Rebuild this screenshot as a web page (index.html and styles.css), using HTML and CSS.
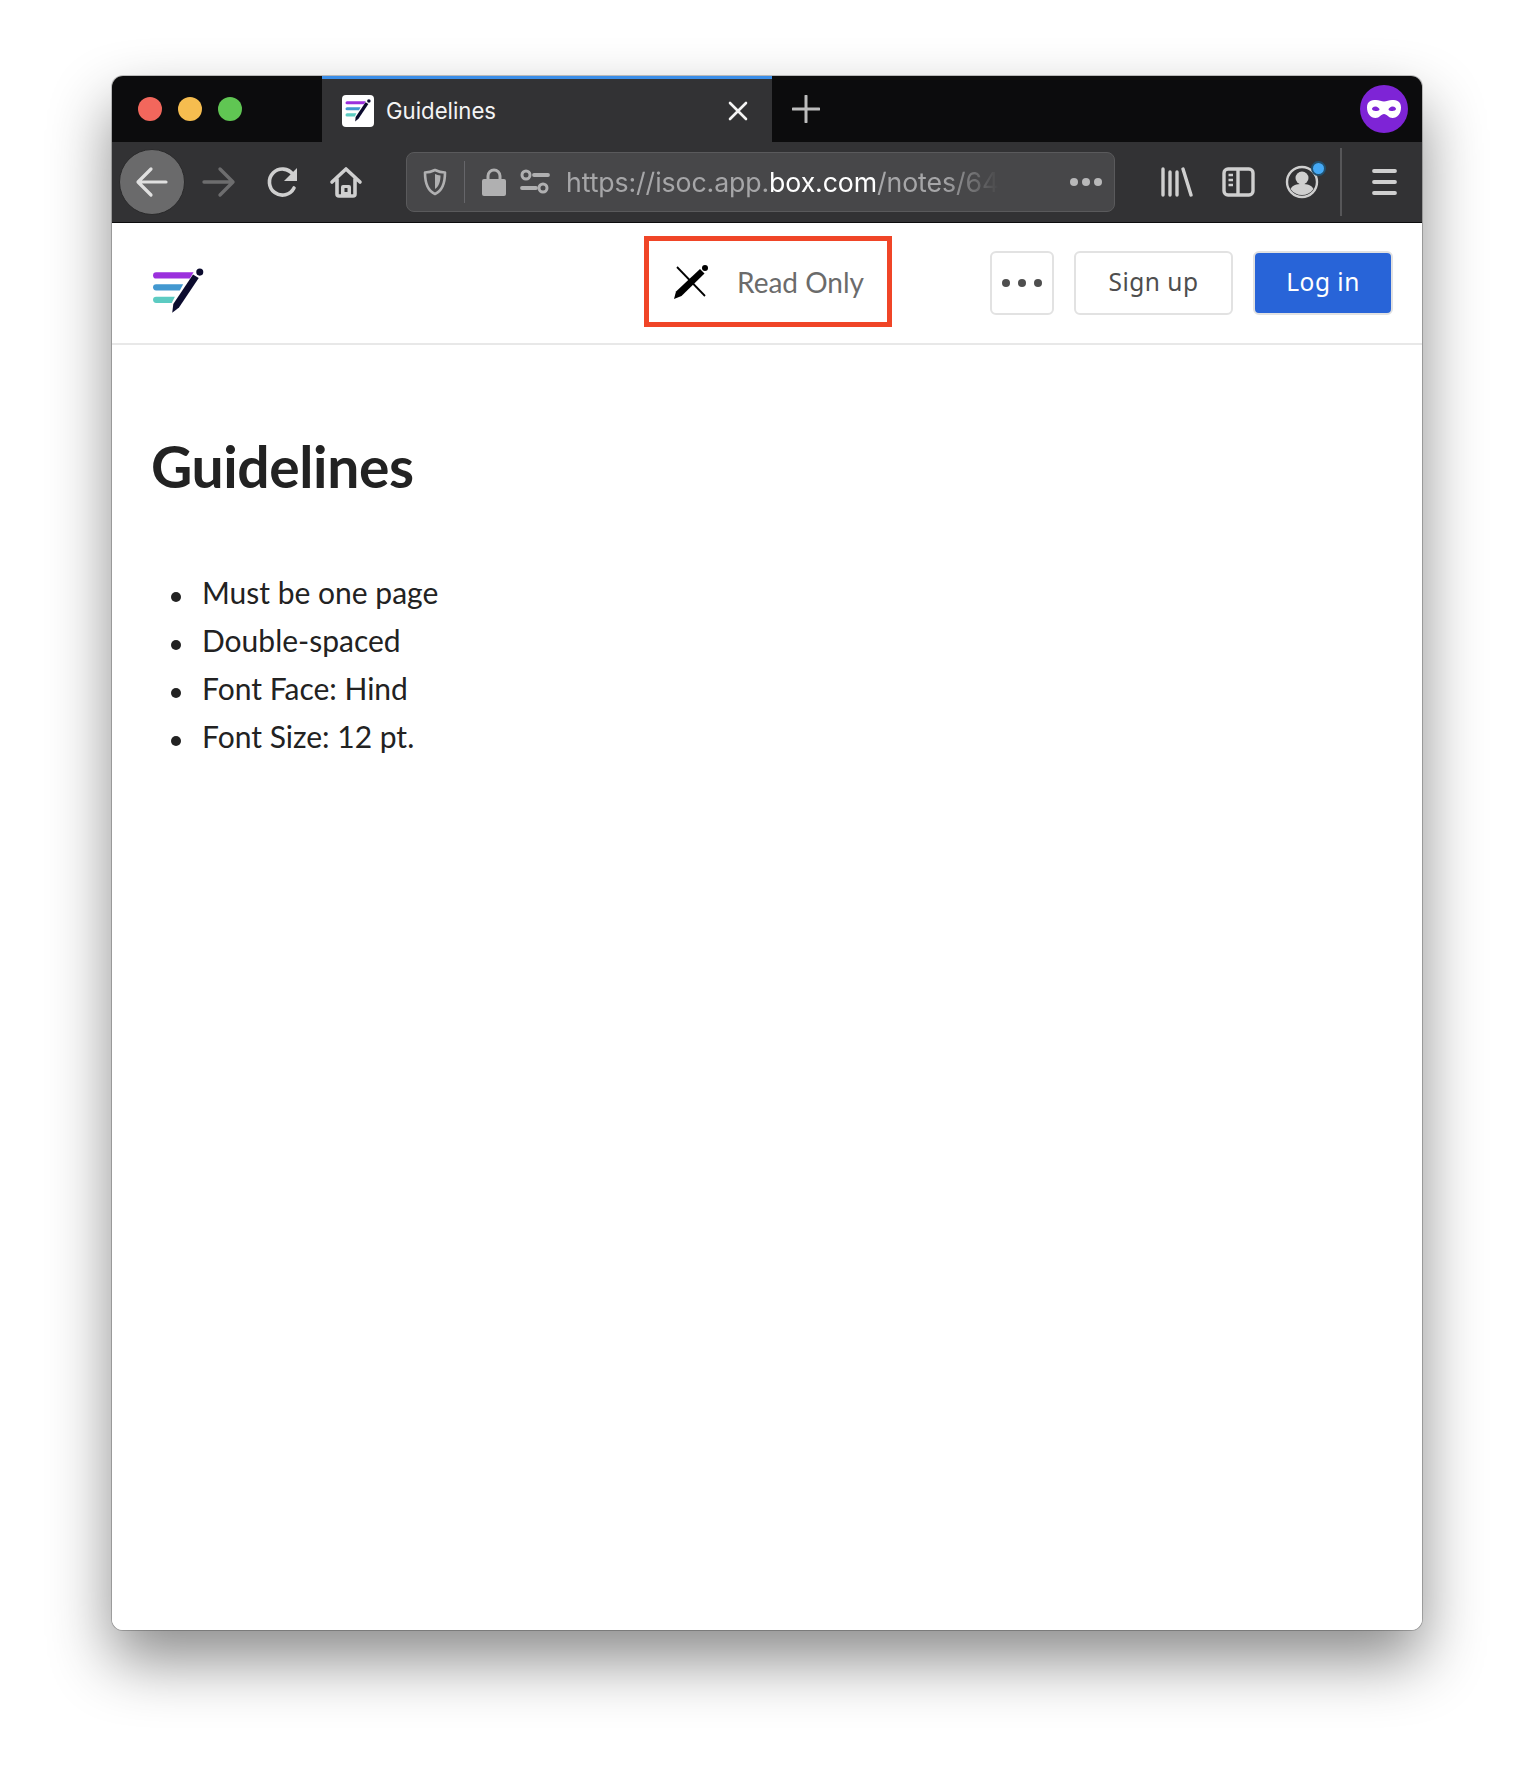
FILE: index.html
```html
<!DOCTYPE html>
<html lang="en">
<head>
    <meta charset="UTF-8">
    <title>Guidelines</title>
    <link rel="stylesheet" href="styles.css">
</head>
<body>
    <svg class="defs" width="0" height="0">
        <symbol id="logo" viewBox="0 0 52 44">
            <path d="M4 4h36l-3.500 6H4a3 3 0 0 1 0-6z" fill="#9b30dd"/>
            <path d="M4 15.500h26l-3.200 6H4a3 3 0 0 1 0-6z" fill="#4298d0"/>
            <path d="M4 27.500h18l-3 6H4a3 3 0 0 1 0-6z" fill="#5ccbc2"/>
            <path d="M19.500 43l1-8.500L39.500 6l5.500 3.500L26 38z" fill="#0b0b2e"/>
            <circle cx="46" cy="3.800" r="3.400" fill="#0b0b2e"/>
        </symbol>
    </svg>

    <div class="window">
        <!-- Tab strip -->
        <div class="tabstrip">
            <div class="lights">
                <span class="light red"></span>
                <span class="light yellow"></span>
                <span class="light green"></span>
            </div>
            <div class="tab">
                <span class="favicon"><svg width="27" height="23"><use href="#logo"/></svg></span>
                <span class="tab-title">Guidelines</span>
                <svg class="tab-close" width="20" height="20" viewBox="0 0 20 20"><path d="M2 2l16 16M18 2L2 18" stroke="#f4f4f4" stroke-width="2.600" stroke-linecap="round"/></svg>
            </div>
            <svg class="new-tab" width="28" height="28" viewBox="0 0 28 28"><path d="M14 1v26M1 14h26" stroke="#bdbdbd" stroke-width="3" stroke-linecap="round"/></svg>
            <span class="private">
                <svg width="34" height="18" viewBox="0 0 34 18"><path fill-rule="evenodd" d="M9 0c3 0 5.500 1.500 8 1.500S22 0 25 0c5 0 9 1.500 9 7.500S30.500 18 25.500 18c-4 0-5.500-4-8.500-4s-4.500 4-8.500 4C3.500 18 0 13.500 0 7.500S4 0 9 0zm-.5 6.500C6 6.500 5 8 5 9s2 2 3.500 2 4-.500 4-1.500-2-3-4-3zm17 0c-2 0-4 2-4 3s2.500 1.500 4 1.500 3.500-1 3.500-2-1-2.500-3.500-2.500z" fill="#fff"/></svg>
            </span>
        </div>

        <!-- Toolbar -->
        <div class="toolbar">
            <span class="back">
                <svg width="34" height="34" viewBox="0 0 34 34"><path d="M31 17H4M16 4L3 17l13 13" fill="none" stroke="#e0e0e0" stroke-width="3.200" stroke-linecap="round" stroke-linejoin="round"/></svg>
            </span>
            <svg class="tool forward" width="36" height="36" viewBox="0 0 36 36"><path d="M4 18h28M20 5l13 13-13 13" fill="none" stroke="#6d6d6e" stroke-width="3.400" stroke-linecap="round" stroke-linejoin="round"/></svg>
            <svg class="tool reload" width="36" height="36" viewBox="0 0 36 36"><path d="M29 24a13 13 0 1 1-1-13.500" fill="none" stroke="#cfcfcf" stroke-width="3.600" stroke-linecap="round"/><path d="M32 4v13H19z" fill="#cfcfcf"/></svg>
            <svg class="tool home" width="36" height="36" viewBox="0 0 36 36"><path d="M4 18L18 5l14 13M9 15v15a2 2 0 0 0 2 2h14a2 2 0 0 0 2-2V15" fill="none" stroke="#cfcfcf" stroke-width="3.600" stroke-linecap="round" stroke-linejoin="round"/><path fill-rule="evenodd" d="M13 32V23a2 2 0 0 1 2-2h6a2 2 0 0 1 2 2v9zm3.500-8v4h3v-4z" fill="#cfcfcf"/></svg>

            <div class="urlbar">
                <svg class="shield" width="24" height="28" viewBox="0 0 24 28"><path d="M12 2c4 2 7 2.500 10 2.500 0 10-2 18-10 21.500C4 22.500 2 14.500 2 4.500 5 4.500 8 4 12 2z" fill="none" stroke="#b0b0b1" stroke-width="2.600" stroke-linejoin="round"/><path d="M12 6c2 1 3 1.200 5.500 1.500 0 6-1.500 11-5.500 13.500z" fill="#b0b0b1"/></svg>
                <span class="url-divider"></span>
                <svg class="lock" width="26" height="28" viewBox="0 0 26 28"><path d="M7 12V8a6 6 0 0 1 12 0v4" fill="none" stroke="#b0b0b1" stroke-width="3"/><rect x="1" y="11" width="24" height="17" rx="2" fill="#b0b0b1"/></svg>
                <svg class="perm" width="30" height="26" viewBox="0 0 30 26"><circle cx="6" cy="6" r="4" fill="none" stroke="#b0b0b1" stroke-width="3"/><path d="M14 6h14M2 19h14" stroke="#b0b0b1" stroke-width="3.800" stroke-linecap="round"/><circle cx="23" cy="19" r="4" fill="none" stroke="#b0b0b1" stroke-width="3"/></svg>
                <span class="url">https://isoc.app.<b>box.com</b>/notes/64</span>
                <span class="url-dots"><i></i><i></i><i></i></span>
            </div>

            <svg class="tool library" width="36" height="32" viewBox="0 0 36 32"><path d="M6 3v26M13 6v23M20 6v23M26 3l8 26" stroke="#cfcfcf" stroke-width="3.400" stroke-linecap="round"/></svg>
            <svg class="tool sidebar" width="36" height="32" viewBox="0 0 36 32"><rect x="4" y="3" width="29" height="26" rx="4" fill="none" stroke="#cfcfcf" stroke-width="3.400"/><path d="M18 3v26" stroke="#cfcfcf" stroke-width="3.400"/><path d="M8.500 9H13M8.500 14H13M8.500 19H13" stroke="#cfcfcf" stroke-width="2.400"/></svg>
            <span class="account">
                <svg width="36" height="36" viewBox="0 0 36 36"><circle cx="18" cy="18" r="15" fill="none" stroke="#cfcfcf" stroke-width="2.400"/><circle cx="18" cy="14" r="6.500" fill="#cfcfcf"/><path d="M6.500 25c2-4 6-5 11.500-5s9.500 1 11.500 5c-3 4-7 6-11.500 6s-8.500-2-11.500-6z" fill="#cfcfcf"/></svg>
                <span class="badge"></span>
            </span>
            <span class="tool-divider"></span>
            <svg class="tool menu" width="36" height="32" viewBox="0 0 36 32"><path d="M8 5h21M8 16h21M8 27h21" stroke="#cfcfcf" stroke-width="3.800" stroke-linecap="round"/></svg>
        </div>

        <!-- Page -->
        <div class="page">
            <header class="app-header">
                <svg class="app-logo" width="54" height="46"><use href="#logo"/></svg>
                <div class="readonly">
                    <svg width="36" height="36" viewBox="0 0 36 36"><path d="M1 35l2-7.500L27 5l4.500 4.500L8.500 32z" fill="#000"/><circle cx="32" cy="4" r="3" fill="#000"/><path d="M4 3l28 29" stroke="#000" stroke-width="1.800"/></svg>
                    <span>Read Only</span>
                </div>
                <div class="actions">
                    <button class="btn more"><i></i><i></i><i></i></button>
                    <button class="btn">Sign up</button>
                    <button class="btn primary">Log in</button>
                </div>
            </header>
            <main class="note">
                <h1>Guidelines</h1>
                <ul>
                    <li>Must be one page</li>
                    <li>Double-spaced</li>
                    <li>Font Face: Hind</li>
                    <li>Font Size: 12 pt.</li>
                </ul>
            </main>
        </div>
    </div>
</body>
</html>
```
FILE: styles.css
```css
html {
    height: 100%;
}

body {
    margin: 0;
    height: 100%;
    box-sizing: border-box;
    padding: 76px 112px 0;
    overflow: hidden;
    background-color: #ffffff;
    font-family: 'Lato', sans-serif;
}

.defs {
    display: block;
    height: 0;
}

.window {
    width: 1310px;
    height: 1554px;
    display: flex;
    flex-direction: column;
    border-radius: 11px;
    overflow: hidden;
    box-shadow: 0 0 0 1px rgba(0, 0, 0, 0.22), 0 30px 62px rgba(0, 0, 0, 0.46);
}

/* Tab strip */
.tabstrip {
    height: 66px;
    flex-shrink: 0;
    display: flex;
    align-items: center;
    padding-right: 14px;
    background-color: #0c0c0d;
}

.lights {
    width: 184px;
    padding-left: 26px;
    display: flex;
    gap: 16px;
}

.light {
    width: 24px;
    height: 24px;
    border-radius: 50%;
}

.light.red { background-color: #f2675c; }
.light.yellow { background-color: #f6bd4f; }
.light.green { background-color: #60c653; }

.tab {
    width: 450px;
    height: 66px;
    box-sizing: border-box;
    border-top: 3px solid #3b8ee8;
    padding: 0 24px 0 20px;
    display: flex;
    align-items: center;
    background-color: #323234;
}

.favicon {
    width: 32px;
    height: 32px;
    border-radius: 4px;
    background-color: #ffffff;
    display: flex;
    align-items: center;
    justify-content: center;
}

.tab-title {
    flex: 1;
    margin-left: 12px;
    color: #f4f4f4;
    font-family: 'Inter', sans-serif;
    font-size: 22.200px;
}

.new-tab {
    margin-left: 20px;
}

.private {
    margin-left: auto;
    width: 48px;
    height: 48px;
    border-radius: 50%;
    background-color: #7e24d6;
    display: flex;
    align-items: center;
    justify-content: center;
}

/* Toolbar */
.toolbar {
    height: 81px;
    flex-shrink: 0;
    box-sizing: border-box;
    border-bottom: 1px solid #0c0c0d;
    display: flex;
    align-items: center;
    padding-left: 7px;
    background-color: #323234;
}

.back {
    width: 64px;
    height: 64px;
    border: 1px solid #2a2a2b;
    border-radius: 50%;
    background-color: #6a6a6b;
    display: flex;
    align-items: center;
    justify-content: center;
}

.forward { margin-left: 15px; }
.reload { margin-left: 29px; }
.home { margin-left: 27px; }
.library { margin-left: 42px; }
.sidebar { margin-left: 27px; }

.urlbar {
    width: 709px;
    height: 60px;
    margin-left: 42px;
    box-sizing: border-box;
    border: 1px solid #5a5a5c;
    border-radius: 8px;
    display: flex;
    align-items: center;
    background-color: #474749;
}

.shield { margin-left: 16px; }

.url-divider {
    width: 1px;
    height: 42px;
    margin-left: 17px;
    background-color: #66666a;
}

.lock { margin-left: 16px; }
.perm { margin-left: 13px; }

.url {
    margin-left: 16px;
    white-space: nowrap;
    color: #a6a6a8;
    font-family: 'Inter', sans-serif;
    font-size: 26.700px;
    letter-spacing: -0.1px;
    -webkit-mask-image: linear-gradient(to right, #000 87%, transparent 100%);
    mask-image: linear-gradient(to right, #000 87%, transparent 100%);
}

.url b {
    color: #ffffff;
    font-weight: 400;
}

.url-dots {
    margin-left: auto;
    margin-right: 12px;
    display: flex;
    gap: 4px;
}

.url-dots i {
    width: 8px;
    height: 8px;
    border-radius: 50%;
    background-color: #b8b8b9;
}

.account {
    position: relative;
    width: 36px;
    height: 36px;
    margin-left: 28px;
}

.badge {
    position: absolute;
    top: -3px;
    right: -6px;
    width: 11px;
    height: 11px;
    border: 2px solid #22506e;
    border-radius: 50%;
    background-color: #45a9f5;
}

.tool-divider {
    width: 2px;
    height: 68px;
    margin-left: 20px;
    background-color: #565658;
}

.menu { margin-left: 24px; }

/* Page */
.page {
    flex: 1;
    background-color: #ffffff;
}

.app-header {
    height: 120px;
    border-bottom: 2px solid #e8e8e8;
    display: flex;
    align-items: center;
    padding: 0 29px 0 40px;
}

.app-logo {
    margin-top: 15px;
}

.readonly {
    width: 248px;
    height: 91px;
    margin-left: 438px;
    margin-top: -3px;
    box-sizing: border-box;
    border: 5px solid #f04527;
    padding-left: 24px;
    display: flex;
    align-items: center;
    gap: 28px;
    color: #6b6b6b;
    font-size: 28px;
}

.actions {
    margin-left: auto;
    display: flex;
    gap: 20px;
}

.btn {
    width: 159px;
    height: 64px;
    padding: 0 0 3px;
    border: 2px solid #e2e2e2;
    border-radius: 6px;
    background-color: #ffffff;
    color: #4e4e4e;
    font-family: 'Noto Sans', sans-serif;
    font-size: 24.500px;
    letter-spacing: 0.5px;
}

.btn.more {
    width: 64px;
    padding: 0;
    display: flex;
    align-items: center;
    justify-content: center;
    gap: 8px;
}

.btn.more i {
    width: 8px;
    height: 8px;
    border-radius: 50%;
    background-color: #4e4e4e;
}

.btn.primary {
    width: 140px;
    color: #ffffff;
    background-color: #2864d8;
}

.note {
    padding: 0 40px;
}

.note h1 {
    margin: 86px 0 0 -1px;
    color: #222222;
    font-size: 57px;
    line-height: 70px;
    letter-spacing: -0.4px;
}

.note ul {
    margin: 67px 0 0;
    padding-left: 19px;
    list-style: none;
    color: #222222;
    font-size: 30px;
    line-height: 48px;
}

.note li {
    display: flex;
    align-items: center;
}

.note li::before {
    content: "";
    width: 10px;
    height: 10px;
    margin-top: 9px;
    margin-right: 21px;
    border-radius: 50%;
    background-color: #222222;
}
```
